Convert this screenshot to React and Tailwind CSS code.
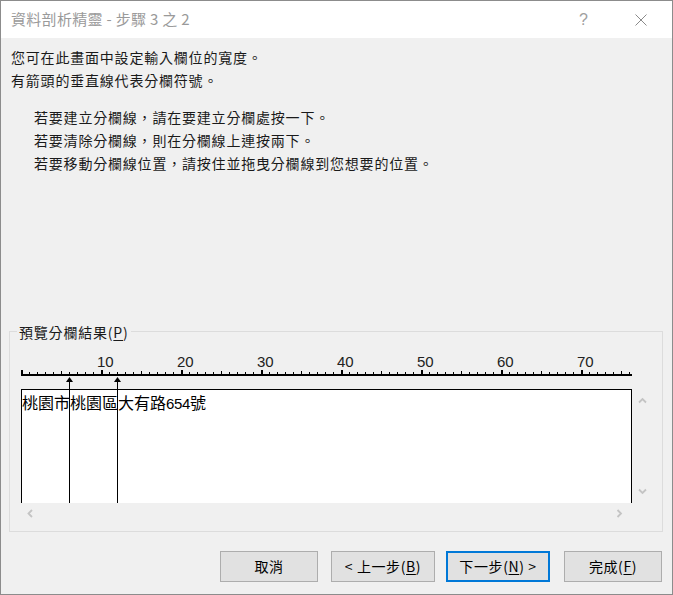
import React from "react";

const Chevron = ({ dir }) => {
  const paths = {
    up: "M1 5.5 L4.5 2 L8 5.5",
    down: "M1 1.5 L4.5 5 L8 1.5",
    left: "M5 1 L1.5 4.5 L5 8",
    right: "M1.5 1 L5 4.5 L1.5 8",
  };
  const vertical = dir === "up" || dir === "down";
  return (
    <svg
      width={vertical ? 9 : 7}
      height={vertical ? 7 : 9}
      viewBox={vertical ? "0 0 9 7" : "0 0 7 9"}
      className="block"
    >
      <path d={paths[dir]} fill="none" stroke="#c4c4c4" strokeWidth="1.8" />
    </svg>
  );
};

const Ruler = () => {
  const ticks = [];
  for (let i = 0; i <= 76; i++) {
    const x = i * 8;
    if (i % 10 === 0) {
      ticks.push(<rect key={i} x={x} y={1} width={2} height={5} fill="#000" />);
    } else if (i % 5 === 0) {
      ticks.push(<rect key={i} x={x} y={2} width={1} height={4} fill="#000" />);
    } else {
      ticks.push(<rect key={i} x={x} y={3} width={1} height={3} fill="#000" />);
    }
  }
  return (
    <svg width="612" height="7" viewBox="0 0 612 7" className="block">
      <rect x="0" y="5" width="611" height="2" fill="#000" />
      {ticks}
    </svg>
  );
};

const Cell = ({ ch, w }) => (
  <span className={`inline-block text-center ${w === 8 ? "w-[8px] font-['Liberation_Sans',sans-serif] text-[15px]" : "w-[16px]"}`}>
    {ch}
  </span>
);

const Btn = ({ children, className = "", primary = false }) => (
  <button
    className={`h-[31px] flex items-center justify-center text-[14px] tracking-[0.6px] text-black bg-[#e1e1e1] ${
      primary ? "border-2 border-[#0078d7]" : "border border-[#adadad]"
    } ${className}`}
  >
    {children}
  </button>
);

export default function App() {
  const address = "桃園市桃園區大有路654號".split("");
  return (
    <div className="w-[673px] h-[595px] border border-[#8c8c8c] flex flex-col bg-[#f0f0f0] font-['Noto_Sans_CJK_TC',sans-serif] overflow-hidden [text-spacing-trim:space-all]">
      {/* Title bar */}
      <div className="h-[37px] bg-white flex items-center shrink-0">
        <div className="pl-[10px] text-[15px] tracking-[0.3px] text-[#9a9a9a] flex-1">資料剖析精靈 - 步驟 3 之 2</div>
        <div className="flex pr-[3px]">
          <div className="w-[57px] flex justify-center text-[16px] text-[#a0a0a0] font-['Liberation_Sans',sans-serif]">?</div>
          <div className="w-[57px] flex justify-center items-center">
            <svg width="12" height="12" viewBox="0 0 12 12">
              <path d="M0.5 0.5 L11.5 11.5 M11.5 0.5 L0.5 11.5" stroke="#8a8a8a" strokeWidth="1" fill="none" />
            </svg>
          </div>
        </div>
      </div>

      {/* Body */}
      <div className="flex-1 flex flex-col pl-[8px] pr-[9px]">
        <div className="pt-[8px] pl-[2px] text-[14px] tracking-[0.8px] leading-[23px] text-[#1a1a1a]">
          <div>您可在此畫面中設定輸入欄位的寬度。</div>
          <div>有箭頭的垂直線代表分欄符號。</div>
          <div className="mt-[14px] pl-[23px]">
            <div>若要建立分欄線，請在要建立分欄處按一下。</div>
            <div>若要清除分欄線，則在分欄線上連按兩下。</div>
            <div>若要移動分欄線位置，請按住並拖曳分欄線到您想要的位置。</div>
          </div>
        </div>

        {/* Group box */}
        <div className="mt-[156px] h-[201px] border border-[#dcdcdc] relative flex flex-col">
          <div className="absolute left-[7px] top-[-10px] px-[2px] bg-[#f0f0f0] text-[14px] tracking-[0.8px] leading-[20px] text-[#1a1a1a]">
            預覽分欄結果(<span className="underline underline-offset-2">P</span>)
          </div>

          {/* Ruler */}
          <div className="h-[57px] flex flex-col">
            <div className="pt-[22px] pl-[87px] flex h-[37px] text-[15px] leading-[15px] text-[#222] font-['Liberation_Sans',sans-serif]">
              {[10, 20, 30, 40, 50, 60, 70].map((n) => (
                <div key={n} className="w-[80px]">{n}</div>
              ))}
            </div>
            <div className="ml-[11px]">
              <Ruler />
            </div>
          </div>

          {/* Preview box + vertical scrollbar */}
          <div className="h-[114px] flex">
            <div className="ml-[11px] w-[611px] bg-white border-l border-t border-r border-black pt-[2px] text-[16px] leading-[20px] text-black whitespace-nowrap">
              {address.map((ch, i) => (
                <Cell key={i} ch={ch} w={/[0-9]/.test(ch) ? 8 : 16} />
              ))}
            </div>
            <div className="w-[21px] flex flex-col items-center justify-between pt-[8px] pb-[8px]">
              <Chevron dir="up" />
              <Chevron dir="down" />
            </div>
          </div>

          {/* Horizontal scrollbar */}
          <div className="h-[20px] flex items-center justify-between pl-[17px] pr-[39px]">
            <Chevron dir="left" />
            <Chevron dir="right" />
          </div>

          {/* Column break arrows */}
          <svg
            className="absolute left-0 top-0 pointer-events-none"
            width="120"
            height="172"
            viewBox="0 0 120 172"
          >
            {[59.5, 107.5].map((x) => (
              <g key={x}>
                <path d={`M${x} 45 L${x - 3.5} 50 L${x + 3.5} 50 Z`} fill="#000" />
                <line x1={x} y1="49" x2={x} y2="171" stroke="#000" strokeWidth="1" />
              </g>
            ))}
          </svg>
        </div>

        {/* Buttons */}
        <div className="mt-[19px] flex pl-[211px]">
          <Btn className="w-[98px]">取消</Btn>
          <Btn className="w-[104px] ml-[13px]">
            &lt; 上一步(<span className="underline underline-offset-2">B</span>)
          </Btn>
          <Btn primary className="w-[104px] ml-[11px]">
            下一步(<span className="underline underline-offset-2">N</span>) &gt;
          </Btn>
          <Btn className="w-[98px] ml-[14px]">
            完成(<span className="underline underline-offset-2">F</span>)
          </Btn>
        </div>
      </div>
    </div>
  );
}
